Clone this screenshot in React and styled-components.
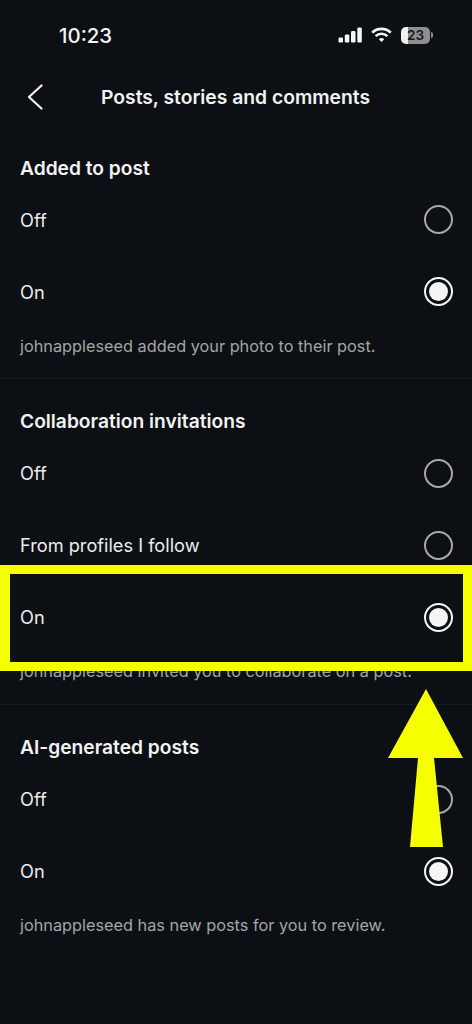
import styled, { createGlobalStyle } from 'styled-components'

const GlobalStyle = createGlobalStyle`
    html, body {
        margin: 0;
        padding: 0;
        background: #0c1014;
    }
    body {
        font-family: 'Inter', 'Liberation Sans', sans-serif;
        color: #f5f5f5;
    }
`

const Page = styled.div`
    position: relative;
    width: 472px;
    height: 1024px;
    overflow: hidden;
    background: #0c1014;
`

//////////////////////////

// Status bar and header

//////////////////////////

const StatusBar = styled.div`
    height: 70px;
    display: flex;
    align-items: center;
    justify-content: space-between;
    padding: 0 42px 0 59px;
    box-sizing: border-box;
`

const Clock = styled.span`
    font-size: 20.4px;
    font-weight: 500;
    color: #f2f2f2;
`

const StatusIcons = styled.div`
    display: flex;
    align-items: center;
    gap: 9px;
`

const Battery = styled.div`
    position: relative;
    width: 29px;
    height: 17px;
    border-radius: 5px;
    background: linear-gradient(90deg, #f2f2f2 0 24%, #8e8e8e 24% 100%);
    display: flex;
    align-items: center;
    justify-content: center;
    font-size: 13.5px;
    font-weight: 600;
    color: #16181b;
    &::after {
        content: '';
        position: absolute;
        right: -3px;
        top: 5.5px;
        width: 2px;
        height: 6px;
        border-radius: 0 2px 2px 0;
        background: #8e8e8e;
    }
`

const Header = styled.div`
    height: 54px;
    display: flex;
    align-items: center;
    padding-left: 27px;
    gap: 58px;
`

const Title = styled.h1`
    margin: 0;
    font-size: 19.3px;
    font-weight: 600;
    color: #f2f2f2;
`

//////////////////////////

// Settings sections

//////////////////////////

const Section = styled.section`
    padding-top: ${({ $first }) => ($first ? '28.5px' : '27px')};
    height: ${({ $height }) => $height}px;
    box-sizing: border-box;
    border-bottom: ${({ $last }) => ($last ? 'none' : '1px solid #14191d')};
`

const Heading = styled.h2`
    margin: 0;
    padding: 0 20px;
    height: 31px;
    line-height: 31px;
    font-size: 19.2px;
    font-weight: 600;
    color: #f2f2f2;
`

const Row = styled.div`
    height: 72px;
    display: flex;
    align-items: center;
    justify-content: space-between;
    padding: 0 19.5px 0 20px;
`

const RowLabel = styled.span`
    font-size: 18.2px;
    font-weight: 400;
    color: #ececec;
`

const Radio = styled.span`
    width: 29px;
    height: 29px;
    box-sizing: border-box;
    border-radius: 50%;
    border: ${({ $on }) => ($on ? '2px solid #f5f5f5' : '2px solid #a8a8a8')};
    display: flex;
    align-items: center;
    justify-content: center;
    &::after {
        content: '';
        display: ${({ $on }) => ($on ? 'block' : 'none')};
        width: 19px;
        height: 19px;
        border-radius: 50%;
        background: #f5f5f5;
    }
`

const Description = styled.p`
    margin: 0;
    padding: 0 20px;
    font-size: 16.3px;
    line-height: 20px;
    margin-top: 8px;
    color: #a3a5a7;
    white-space: nowrap;
`

//////////////////////////

// Yellow annotation

//////////////////////////

const HighlightBox = styled.div`
    position: absolute;
    left: 0;
    top: 565px;
    width: 472px;
    height: 106px;
    box-sizing: border-box;
    border: solid #f6ff00;
    border-width: 9px 9px 9px 10px;
`

const ArrowMark = styled.svg`
    position: absolute;
    left: 380px;
    top: 680px;
`

const ChevronLeft = () => (
    <svg width="16" height="26" viewBox="0 0 16 26" fill="none">
        <path d="M14.5 1.5 2 13l12.5 11.5" stroke="#f2f2f2" strokeWidth="2.2" strokeLinecap="round" strokeLinejoin="round" />
    </svg>
)

const Signal = () => (
    <svg width="24" height="16" viewBox="0 0 24 16" fill="#f5f5f5">
        <rect x="0.5" y="10.5" width="4.5" height="5" rx="1.2" />
        <rect x="6.8" y="7.5" width="4.5" height="8" rx="1.2" />
        <rect x="13" y="4" width="4.5" height="11.5" rx="1.2" />
        <rect x="19.3" y="0.5" width="4.5" height="15" rx="1.2" />
    </svg>
)

const Wifi = () => (
    <svg width="21" height="16" viewBox="0 0 21 16" fill="none" stroke="#f5f5f5" strokeWidth="2.6">
        <path d="M1.2 5.6a13.4 13.4 0 0 1 18.6 0" />
        <path d="M4.6 9.1a8.6 8.6 0 0 1 11.8 0" />
        <path d="M10.5 15 7.8 12.2a3.9 3.9 0 0 1 5.4 0Z" fill="#f5f5f5" stroke="none" />
    </svg>
)

const sections = [
    {
        title: 'Added to post',
        height: 255,
        options: [['Off', false], ['On', true]],
        text: 'johnappleseed added your photo to their post.',
    },
    {
        title: 'Collaboration invitations',
        height: 326,
        options: [['Off', false], ['From profiles I follow', false], ['On', true]],
        text: 'johnappleseed invited you to collaborate on a post.',
    },
    {
        title: 'AI-generated posts',
        height: 255,
        options: [['Off', false], ['On', true]],
        text: 'johnappleseed has new posts for you to review.',
    },
]

export default function App() {
    return (
        <Page>
            <GlobalStyle />
            <StatusBar>
                <Clock>10:23</Clock>
                <StatusIcons>
                    <Signal />
                    <Wifi />
                    <Battery>23</Battery>
                </StatusIcons>
            </StatusBar>
            <Header>
                <ChevronLeft />
                <Title>Posts, stories and comments</Title>
            </Header>
            {sections.map((section, i) => (
                <Section key={section.title} $first={i === 0} $last={i === 2} $height={section.height}>
                    <Heading>{section.title}</Heading>
                    {section.options.map(([label, on]) => (
                        <Row key={label}>
                            <RowLabel>{label}</RowLabel>
                            <Radio $on={on} />
                        </Row>
                    ))}
                    <Description>{section.text}</Description>
                </Section>
            ))}
            <HighlightBox />
            <ArrowMark width="92" height="175" viewBox="0 0 92 175">
                <path d="M46 9 83 78H54L63 167H30L38 78H8Z" fill="#f6ff00" />
            </ArrowMark>
        </Page>
    )
}
